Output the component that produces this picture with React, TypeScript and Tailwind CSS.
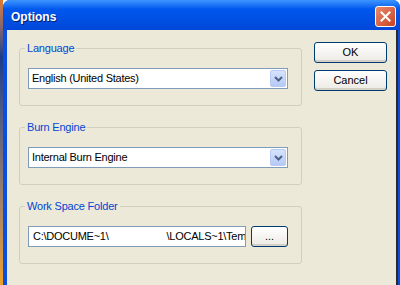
import { ReactNode } from "react";

const font = "font-['Liberation_Sans',Arial,sans-serif]";

function GroupBox({ label, children }: { label: string; children: ReactNode }) {
  return (
    <fieldset className="rounded-[3px] border border-[#d0d0bf] pl-[8px] pr-[13px] pt-[13px] pb-[16px]">
      <legend className="-ml-[3px] px-[2px] text-[11px] leading-[13px] tracking-[-0.2px] text-[#0046d5]">{label}</legend>
      {children}
    </fieldset>
  );
}

function Combo({ value }: { value: string }) {
  return (
    <div className="flex h-[21px] items-stretch border border-[#7f9db9] bg-white">
      <div className="flex flex-1 items-center pl-[3px] text-[11px] tracking-[-0.25px] text-black">{value}</div>
      <div className="m-[1px] flex w-[16px] items-center justify-center rounded-[2px] border border-[#b9cbf3] bg-gradient-to-b from-[#d7e3fd] to-[#b4c9f7]">
        <svg width="9" height="6" viewBox="0 0 9 6">
          <path d="M1 1 L4.5 4.5 L8 1" fill="none" stroke="#4d6185" strokeWidth="2" />
        </svg>
      </div>
    </div>
  );
}

function XpButton({ children, className = "" }: { children: ReactNode; className?: string }) {
  return (
    <button
      type="button"
      className={`flex items-center justify-center rounded-[3px] border border-[#003c74] bg-gradient-to-b from-white to-[#eceae3] text-[11px] text-black shadow-[inset_0_-2px_0_#d6d0c5] ${className}`}
    >
      {children}
    </button>
  );
}

export default function App() {
  return (
    <div className={`flex h-[285px] w-[400px] overflow-hidden ${font}`}>
      <div className="w-[3px] bg-gradient-to-b from-[#e07a2a] via-[#1c3c8a] via-20% to-[#f0a020]" />
      <div className="flex flex-1 flex-col rounded-t-[7px] bg-[#0a4ee0]">
        <div className="flex h-[30px] items-center justify-between rounded-t-[7px] bg-gradient-to-b from-[#3d95ff] via-[#0058ee] via-30% to-[#0047d8] pl-[8px] pr-[4px]">
          <span className="pt-[4px] text-[12px] font-bold text-white [text-shadow:1px_1px_0_#0a1f6e]">Options</span>
          <div className="mt-[2px] flex h-[21px] w-[21px] items-center justify-center rounded-[3px] border border-white bg-gradient-to-br from-[#e88a6c] to-[#c8401e]">
            <svg width="11" height="11" viewBox="0 0 11 11">
              <path d="M1.5 1.5 L9.5 9.5 M9.5 1.5 L1.5 9.5" stroke="white" strokeWidth="2" strokeLinecap="square" />
            </svg>
          </div>
        </div>
        <div className="flex flex-1 pl-[4px] pr-[2px]">
          <div className="flex flex-1 gap-[12px] border-r-2 border-[#2a2a2a] bg-[#ece9d8] pl-[12px] pt-[12px]">
            <div className="flex w-[283px] flex-col gap-[15px]">
              <GroupBox label="Language">
                <Combo value="English (United States)" />
              </GroupBox>
              <GroupBox label="Burn Engine">
                <Combo value="Internal Burn Engine" />
              </GroupBox>
              <GroupBox label="Work Space Folder">
                <div className="flex gap-[5px]">
                  <div className="flex h-[21px] w-[218px] items-center overflow-hidden whitespace-nowrap border border-[#7f9db9] bg-white pl-[4px] text-[11px] tracking-[-0.25px] text-black">
                    <span>C:\DOCUME~1\</span>
                    <span className="ml-[58px]">\LOCALS~1\Temp</span>
                  </div>
                  <XpButton className="h-[21px] flex-1 leading-none">...</XpButton>
                </div>
              </GroupBox>
            </div>
            <div className="flex w-[73px] flex-col gap-[7px]">
              <XpButton className="h-[21px]">OK</XpButton>
              <XpButton className="h-[21px]">Cancel</XpButton>
            </div>
          </div>
        </div>
      </div>
    </div>
  );
}
